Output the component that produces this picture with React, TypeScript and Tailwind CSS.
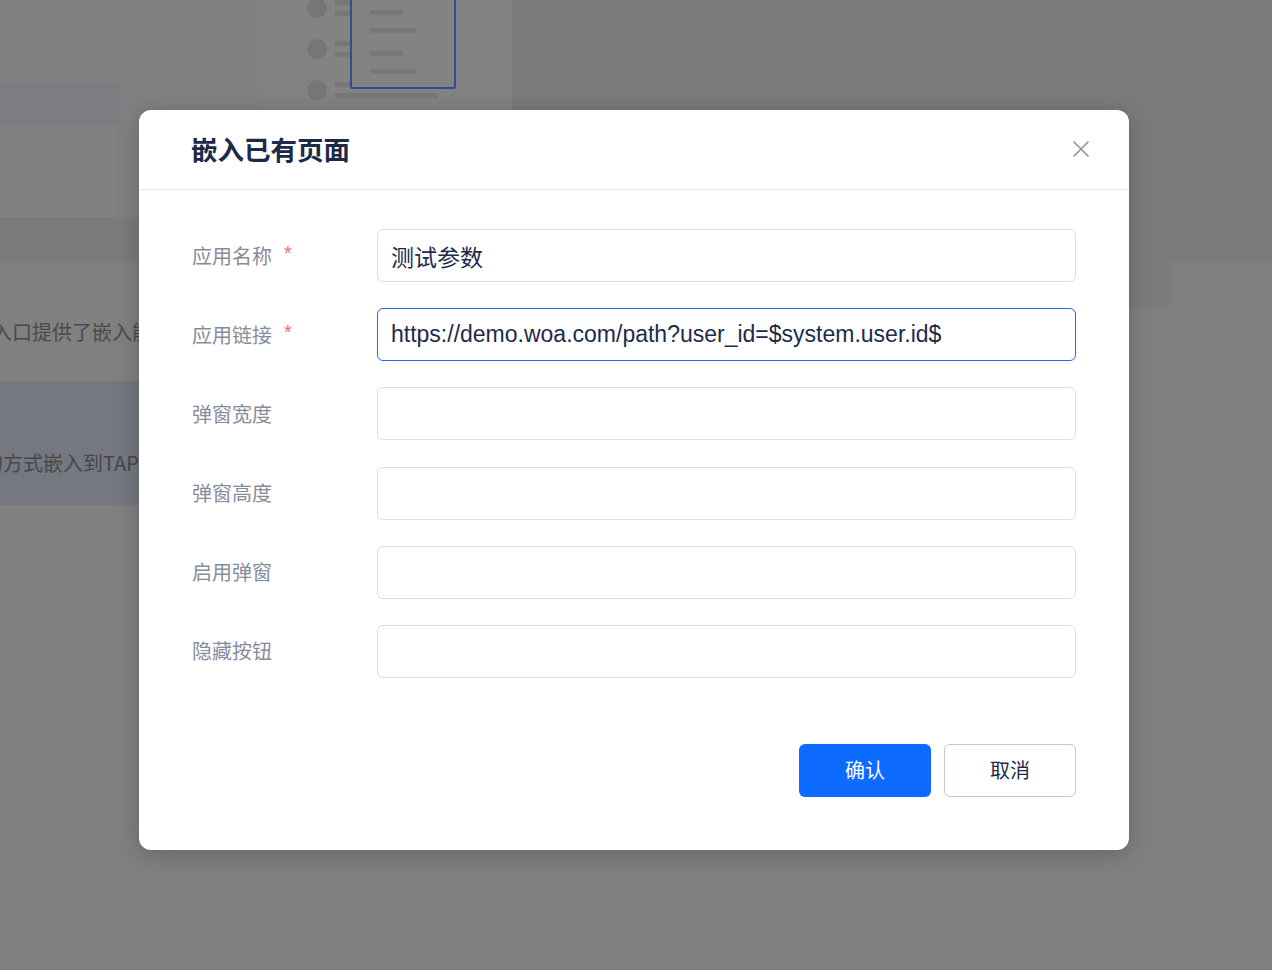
import { useState } from 'react';

const fields = [
  { label: '应用名称', required: true, value: '测试参数' },
  { label: '应用链接', required: true, value: 'https://demo.woa.com/path?user_id=$system.user.id$', focused: true },
  { label: '弹窗宽度', required: false, value: '' },
  { label: '弹窗高度', required: false, value: '' },
  { label: '启用弹窗', required: false, value: '' },
  { label: '隐藏按钮', required: false, value: '' },
];

function Backdrop() {
  return (
    <div className="flex h-[970px] w-full flex-col overflow-hidden bg-[#808080] font-['Noto_Sans_CJK_SC',sans-serif]">
      {/* top strip */}
      <div className="flex h-[217px] shrink-0">
        <div className="w-[263px] shrink-0 bg-[#818181] pt-[82px]">
          <div className="h-[44px] w-[119px] bg-[#7b7d82]" />
        </div>
        <div className="relative w-[249px] shrink-0 bg-[#838383]">
          <div className="-mt-[2px] flex flex-col gap-[21px] pl-[44px]">
            {[0, 1, 2].map((i) => (
              <div key={i} className="flex items-center gap-[8px]">
                <div className="size-[20px] rounded-full bg-[#767676]" />
                <div className="flex flex-col gap-[6px]">
                  <div className="h-[5px] w-[40px] bg-[#787878]" />
                  <div className={i === 2 ? 'h-[5px] w-[103px] bg-[#787878]' : 'h-[5px] w-[40px] bg-[#787878]'} />
                </div>
              </div>
            ))}
          </div>
          <div className="absolute left-[87px] top-[-2px] flex h-[91px] w-[106px] flex-col gap-[13px] rounded-b-[2px] border-2 border-[#2f4e8c] bg-[#838383] pl-[18px] pt-[10px]">
            <div className="h-[5px] w-[33px] bg-[#787878]" />
            <div className="h-[5px] w-[46px] bg-[#787878]" />
            <div className="mt-[5px] h-[5px] w-[33px] bg-[#787878]" />
            <div className="h-[5px] w-[46px] bg-[#787878]" />
          </div>
        </div>
        <div className="flex-1 bg-[#7b7b7b]" />
      </div>
      <div className="h-[45px] shrink-0 bg-[#7b7b7b]" />
      <div className="flex h-[46px] shrink-0">
        <div className="w-[139px] shrink-0" />
        <div className="w-[1033px] shrink-0 rounded-br-[8px] bg-[#7b7b7b]" />
      </div>
      <div className="flex h-[73px] shrink-0 items-start pt-[10px]">
        <p className="-ml-[8px] whitespace-nowrap text-[20px] leading-[28px] text-[#4a4a4a]">入口提供了嵌入能力</p>
      </div>
      <div className="flex h-[124px] w-[160px] shrink-0 items-end bg-[#757880] pb-[28px]">
        <p className="-ml-[17px] whitespace-nowrap text-[20px] leading-[28px] text-[#474747]">的方式嵌入到TAPD</p>
      </div>
    </div>
  );
}

function CloseIcon() {
  return (
    <svg width="18" height="18" viewBox="0 0 18 18" fill="none" stroke="#8a92a3" strokeWidth="1.6" strokeLinecap="round">
      <path d="M2 2L16 16M16 2L2 16" />
    </svg>
  );
}

export default function App() {
  const [values, setValues] = useState(fields.map((f) => f.value));

  return (
    <div className="relative h-[970px] w-full overflow-hidden">
      <Backdrop />

      {/* Modal */}
      <div className="absolute left-[139px] top-[110px] flex h-[740px] w-[990px] flex-col rounded-[12px] bg-white shadow-[0_4px_24px_rgba(0,0,0,0.22)] font-['Liberation_Sans','Noto_Sans_CJK_SC',sans-serif]">
        <header className="flex h-[80px] shrink-0 items-center justify-between border-b border-[#e7e8eb] pl-[52px] pr-[38px]">
          <h2 className="font-['Noto_Sans_CJK_SC',sans-serif] text-[26.5px] font-bold leading-none text-[#1c2a4a]">
            嵌入已有页面
          </h2>
          <button type="button" aria-label="关闭" className="-mt-[2px] flex size-[20px] items-center justify-center">
            <CloseIcon />
          </button>
        </header>

        <form className="flex flex-1 flex-col px-[53px] pb-[53px] pt-[39px]" onSubmit={(e) => e.preventDefault()}>
          <div className="flex flex-col gap-[26.2px]">
            {fields.map((field, i) => (
              <div key={field.label} className="flex h-[53px] items-center">
                <label className="flex w-[185px] shrink-0 items-center font-['Noto_Sans_CJK_SC',sans-serif] text-[20px] text-[#878c9b]">
                  {field.label}
                  {field.required ? (
                    <span className="ml-[12px] -mt-[6px] font-['Liberation_Sans',sans-serif] text-[20px] text-[#f56c6c]">*</span>
                  ) : null}
                </label>
                <input
                  value={values[i]}
                  onChange={(e) => setValues((v) => v.map((x, j) => (j === i ? e.target.value : x)))}
                  className={
                    field.focused
                      ? 'h-[53px] w-[699px] rounded-[6px] border border-[#1a6cf5] bg-white px-[13px] text-[23px] text-[#1d2b4a] outline-none'
                      : 'h-[53px] w-[699px] rounded-[6px] border border-[#dcdee3] bg-white px-[13px] text-[23px] text-[#1d2b4a] outline-none'
                  }
                />
              </div>
            ))}
          </div>

          <div className="mt-[66px] flex justify-end gap-[13px]">
            <button
              type="submit"
              className="h-[53px] w-[132px] rounded-[6px] bg-[#0e6bff] font-['Noto_Sans_CJK_SC',sans-serif] text-[20px] text-white"
            >
              确认
            </button>
            <button
              type="button"
              className="h-[53px] w-[132px] rounded-[6px] border border-[#c4c7cf] bg-white font-['Noto_Sans_CJK_SC',sans-serif] text-[20px] text-[#1d2b4a]"
            >
              取消
            </button>
          </div>
        </form>
      </div>
    </div>
  );
}
